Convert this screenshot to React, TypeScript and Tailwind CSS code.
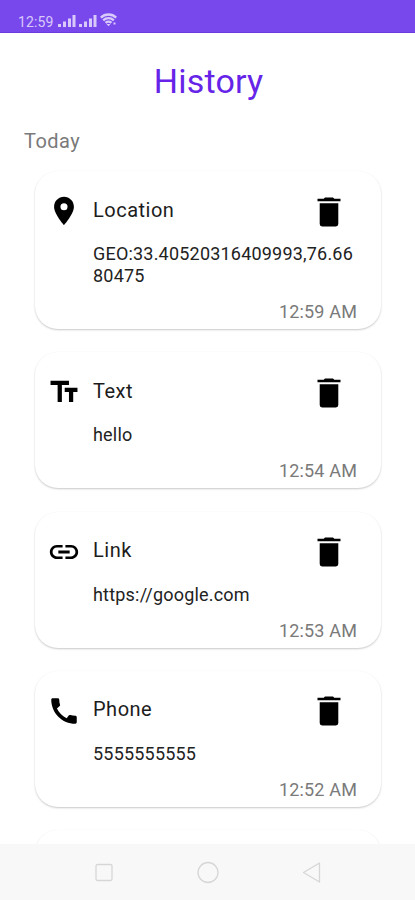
import React from 'react';
import { MdCall, MdLink, MdLocationOn, MdTextFields } from 'react-icons/md';
import type { IconType } from 'react-icons';

interface HistoryItem {
  title: string;
  value: string;
  time: string;
  icon: IconType;
}

const items: HistoryItem[] = [
  { title: 'Location', value: 'GEO:33.40520316409993,76.6680475', time: '12:59 AM', icon: MdLocationOn },
  { title: 'Text', value: 'hello', time: '12:54 AM', icon: MdTextFields },
  { title: 'Link', value: 'https://google.com', time: '12:53 AM', icon: MdLink },
  { title: 'Phone', value: '5555555555', time: '12:52 AM', icon: MdCall },
];

const cardClasses = 'shrink-0 rounded-[23px] bg-white shadow-[0_1px_2px_rgba(0,0,0,0.22)]';

function SignalIcon() {
  return (
    <svg className="h-3 w-[18px]" viewBox="0 0 18 12" fill="currentColor">
      <rect x="0" y="9" width="3" height="3" />
      <rect x="5" y="6.5" width="3" height="5.5" />
      <rect x="10" y="3.5" width="3" height="8.5" />
      <rect x="14.5" y="0" width="3" height="12" />
    </svg>
  );
}

function WifiIcon() {
  return (
    <svg className="h-[14px] w-[17px]" viewBox="0 0 17 14" fill="none" stroke="currentColor" strokeWidth="2.4">
      <path d="M0.8 4.6a11 11 0 0 1 15.4 0" />
      <path d="M3.2 7.3a7.6 7.6 0 0 1 10.6 0" />
      <path d="M5.6 9.8a4.2 4.2 0 0 1 5.8 0" />
      <path d="M8.5 13.2l-2-2.2h4z" fill="currentColor" stroke="none" />
      <rect x="13.5" y="9.5" width="2" height="2" fill="currentColor" stroke="none" />
    </svg>
  );
}

function TrashIcon() {
  return (
    <svg className="mt-px mr-4 h-[30px] w-6" viewBox="0 0 24 30" fill="currentColor">
      <path d="M8 0.5h8l1.3 1.2h6.2V4.2H0.5V1.7h6.2z" />
      <path d="M2.7 6.2h18.6v20.8a2.4 2.4 0 0 1-2.4 2.4H5.1a2.4 2.4 0 0 1-2.4-2.4z" />
    </svg>
  );
}

function StatusBar() {
  return (
    <div className="flex h-[33px] shrink-0 items-end border-b border-[#6a3be0] bg-[#7848ec] pb-[3px] pl-[18px] text-[#d9c9fb]">
      <span className="w-[40px] text-[14px] leading-[14px] tracking-[0.1px]">12:59</span>
      <div className="flex items-end gap-[3px] pb-[2px]">
        <SignalIcon />
        <SignalIcon />
        <WifiIcon />
      </div>
    </div>
  );
}

function HistoryCard({ item }: { item: HistoryItem }) {
  const Icon = item.icon;

  return (
    <div className={`flex flex-col pt-5 pr-6 pb-[6px] pl-3 ${cardClasses}`}>
      <div className="flex h-10 items-center">
        <Icon className="size-[34px] text-black" />
        <h2 className="ml-3 flex-1 pb-[3px] text-[20px] leading-6 tracking-[0.5px] text-[#1c1c1c]">{item.title}</h2>
        <TrashIcon />
      </div>
      <p className="mt-3 ml-[46px] w-[266px] text-[18px] leading-[22px] tracking-[0.2px] break-all text-[#222222]">{item.value}</p>
      <time className="mt-[14px] self-end text-[18px] leading-[22px] tracking-[0.15px] text-[#7a7a7a]">{item.time}</time>
    </div>
  );
}

function NavigationBar() {
  return (
    <nav className="flex h-14 shrink-0 items-center justify-center gap-20 bg-[#f8f8f8] text-[#d6d6d6]">
      <svg className="size-6" viewBox="0 0 24 24" fill="none" stroke="currentColor" strokeWidth="1.3">
        <rect x="4" y="4.5" width="16" height="16" rx="1.5" />
      </svg>
      <svg className="size-6" viewBox="0 0 24 24" fill="none" stroke="currentColor" strokeWidth="1.3">
        <circle cx="12" cy="12.5" r="10" />
      </svg>
      <svg className="size-6" viewBox="0 0 24 24" fill="none" stroke="currentColor" strokeWidth="1.3" strokeLinejoin="round">
        <path d="M3.5 12.5L19.5 3v19z" />
      </svg>
    </nav>
  );
}

export default function App() {
  return (
    <div className="flex h-screen w-full flex-col overflow-hidden bg-white font-['Roboto',sans-serif]">
      <StatusBar />
      <main className="min-h-0 flex-1 overflow-hidden">
        <h1 className="pt-7 pl-0.5 text-center text-[34px] leading-10 tracking-[0.2px] text-[#6624e8]">History</h1>
        <p className="mt-7 pl-6 text-[20px] leading-6 tracking-[0.45px] text-[#7a7a7a]">Today</p>
        <section className="mt-[18px] flex flex-col gap-[23.3px] pr-[34px] pl-[35px]">
          {items.map((item) => (
            <HistoryCard key={item.title} item={item} />
          ))}
          {/* next entry, still below the fold */}
          <div className={`h-[136px] ${cardClasses}`} />
        </section>
      </main>
      <NavigationBar />
    </div>
  );
}
